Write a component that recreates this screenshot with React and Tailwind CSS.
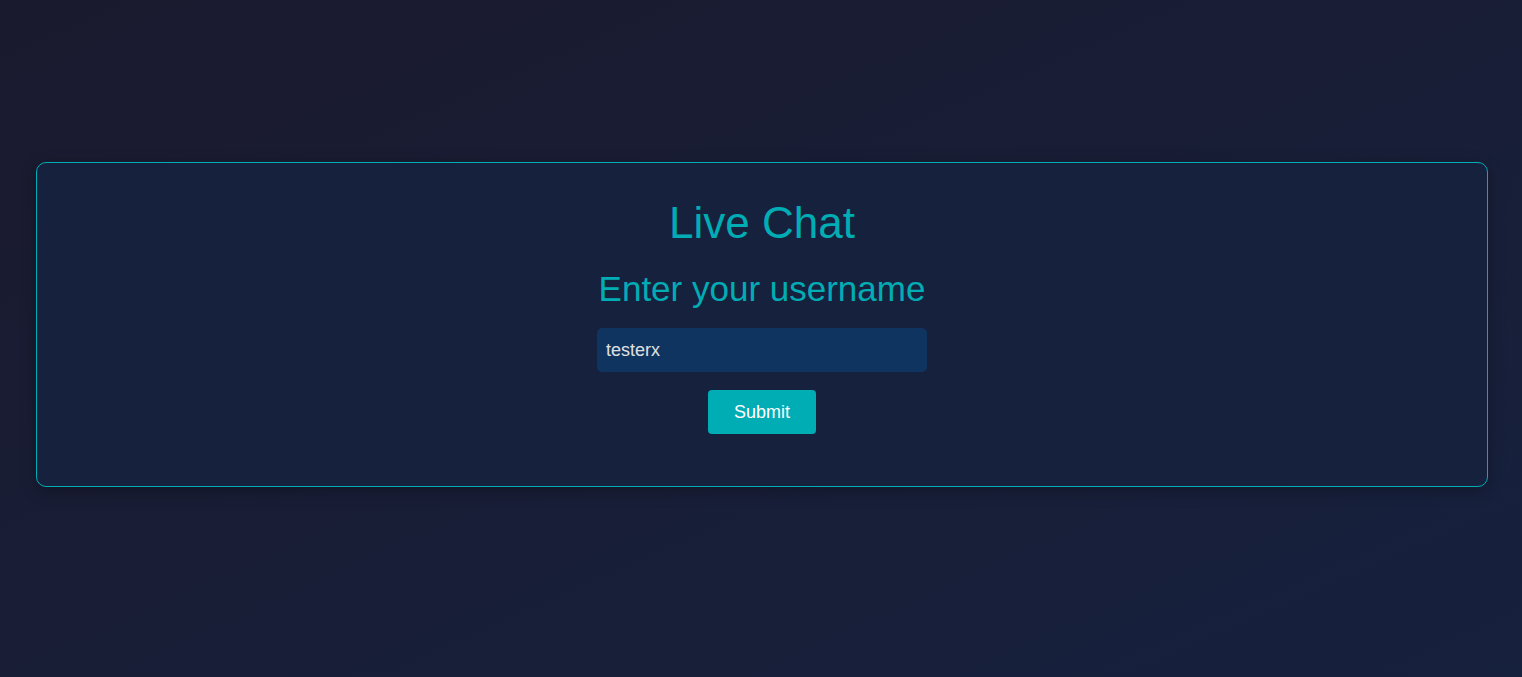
export default function App() {
  return (
    <div
      className="min-h-screen w-full bg-linear-to-br from-[#1a1a2e] to-[#16213e] pt-[162px] pl-[36px] pr-[34px]"
      style={{ fontFamily: '"Liberation Sans", Arial, sans-serif' }}
    >
      <div className="border border-[#00adb5] rounded-[10px] bg-[#16213e] shadow-[0_4px_16px_rgba(0,0,0,0.25)] flex flex-col items-center pt-[35px] pb-[52px]">
        <h1 className="text-[44px] leading-[50px] text-[#00adb5] font-normal">Live Chat</h1>
        <h2 className="mt-[21px] text-[35px] leading-[40px] text-[#00adb5] font-normal">Enter your username</h2>
        <input
          className="mt-[19px] w-[330px] h-[44px] rounded-[5px] bg-[#0f3460] text-[#e0e0e0] text-[18px] px-[9px] outline-none"
          defaultValue="testerx"
        />
        <button className="mt-[18px] w-[108px] h-[44px] rounded-[4px] bg-[#00adb5] text-white text-[18px]">
          Submit
        </button>
      </div>
    </div>
  );
}
